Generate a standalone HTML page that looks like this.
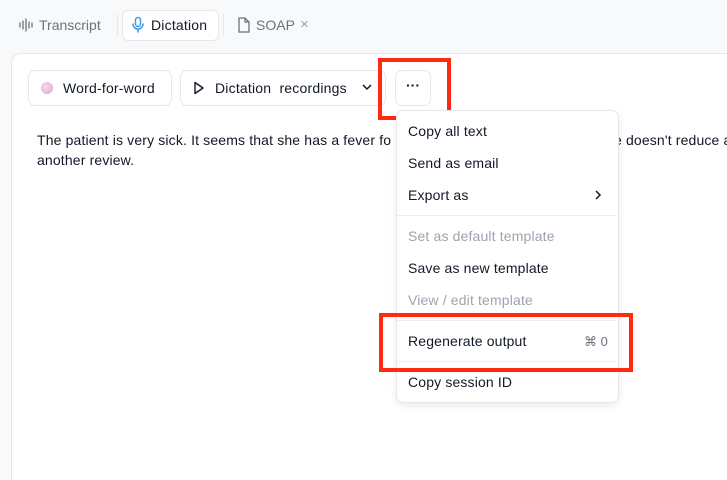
<!DOCTYPE html>
<html><head><style>
*{box-sizing:border-box;margin:0;padding:0}
html{width:727px;height:480px;overflow:hidden}
body{width:727px;height:480px;overflow:hidden;background:#f8f9fb;font-family:"Liberation Sans",sans-serif;font-size:14px;color:#111827;position:relative}
.a{position:absolute;white-space:nowrap}
.btn{position:absolute;background:#fff;border:1px solid #e5e7eb;border-radius:7px}
.mi{position:absolute;left:408px;font-size:14px;color:#111827;letter-spacing:0.15px}
.dis{color:#9ca3af}
.sep{position:absolute;left:397px;width:220px;height:1px;background:#eceef2}
.red{position:absolute;border:4px solid #ff2a0f}
</style></head><body>
<svg class="a" style="left:18px;top:17px" width="18" height="16" viewBox="0 0 18 16" stroke="#6b7280" stroke-width="1.3" stroke-linecap="round"><path d="M2 6v4M5 4v8M8 2v12M11 5v6M14 6v4"/></svg>
<div class="a" style="left:39px;top:17px;color:#6b7280">Transcript</div>
<div class="a" style="left:117px;top:14px;width:1px;height:22px;background:#e5e7eb"></div>
<div class="btn" style="left:122px;top:10px;width:97px;height:31px;border-radius:6px"></div>
<svg class="a" style="left:131px;top:16px" width="14" height="18" viewBox="0 0 14 18" fill="none" stroke="#3b9eea" stroke-width="1.5" stroke-linecap="round"><rect x="4.5" y="1.5" width="5" height="9" rx="2.5"/><path d="M2 8a5 5 0 0 0 10 0M7 13v3"/></svg>
<div class="a" style="left:151px;top:17px;letter-spacing:0.2px">Dictation</div>
<div class="a" style="left:223px;top:14px;width:1px;height:22px;background:#e5e7eb"></div>
<svg class="a" style="left:237px;top:16px" width="14" height="18" viewBox="0 0 14 18" fill="none" stroke="#6b7280" stroke-width="1.3"><path d="M2 2h6l4 4v10H2z M8 2v4h4"/></svg>
<div class="a" style="left:256px;top:17px;color:#6b7280">SOAP</div>
<div class="a" style="left:300px;top:16px;color:#9ca3af;font-size:15px">×</div>
<div style="position:absolute;left:11px;top:53px;width:740px;height:440px;background:#fff;border:1px solid #e5e7eb;border-radius:10px"></div>
<div class="btn" style="left:28px;top:70px;width:144px;height:36px"></div>
<div class="a" style="left:41px;top:82px;width:12px;height:12px;border-radius:50%;background:radial-gradient(circle at 40% 40%,#f6ddf0,#d9a2cf)"></div>
<div class="a" style="left:63px;top:80px;letter-spacing:0.2px">Word-for-word</div>
<div class="btn" style="left:180px;top:70px;width:206px;height:36px"></div>
<svg class="a" style="left:193px;top:81px" width="12" height="14" viewBox="0 0 12 14" fill="none" stroke="#111827" stroke-width="1.4" stroke-linejoin="round"><path d="M2 1.5l8 5.5-8 5.5z"/></svg>
<div class="a" style="left:215px;top:80px;letter-spacing:0.2px">Dictation&nbsp; recordings</div>
<svg class="a" style="left:361px;top:82px" width="12" height="10" viewBox="0 0 12 10" fill="none" stroke="#111827" stroke-width="1.5"><path d="M2 3l4 4 4-4"/></svg>
<div class="btn" style="left:395px;top:70px;width:36px;height:36px"></div>
<div class="a" style="left:406px;top:77px;font-size:14px;font-weight:bold">···</div>
<div class="red" style="left:378px;top:58px;width:73px;height:62px"></div>
<div class="a" style="left:37px;top:132px;letter-spacing:0.15px">The patient is very sick. It seems that she has a fever fo</div>
<div class="a" style="left:614px;top:132px;letter-spacing:0.15px">e doesn't reduce a</div>
<div class="a" style="left:37px;top:152px;letter-spacing:0.15px">another review.</div>
<div style="position:absolute;left:396px;top:110px;width:223px;height:293px;background:#fff;border:1px solid #e5e7eb;border-radius:7px;box-shadow:0 3px 8px rgba(0,0,0,.08)"></div>
<div class="mi" style="top:123px">Copy all text</div>
<div class="mi" style="top:155px">Send as email</div>
<div class="mi" style="top:187px">Export as</div>
<svg class="a" style="left:593px;top:189px" width="10" height="12" viewBox="0 0 10 12" fill="none" stroke="#111827" stroke-width="1.5"><path d="M3 2l4 4-4 4"/></svg>
<div class="sep" style="top:215px"></div>
<div class="mi dis" style="top:228px">Set as default template</div>
<div class="mi" style="top:260px">Save as new template</div>
<div class="mi dis" style="top:292px">View / edit template</div>
<div class="sep" style="top:320px"></div>
<div class="mi" style="top:333px">Regenerate output</div>
<div class="a" style="left:584px;top:334px;color:#6b7280;font-size:13px">⌘ 0</div>
<div class="sep" style="top:361px"></div>
<div class="mi" style="top:374px">Copy session ID</div>
<div class="red" style="left:379px;top:313px;width:254px;height:59px"></div>
</body></html>
